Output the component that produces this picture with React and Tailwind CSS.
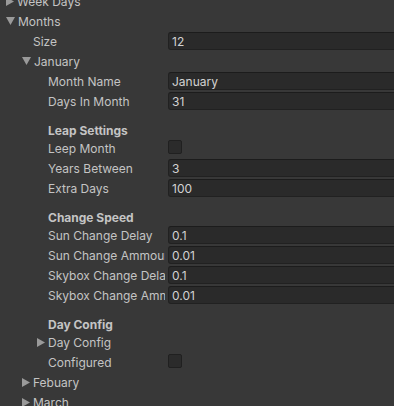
import React from "react";

const Arrow = ({ open }) =>
  open ? (
    <svg width="9" height="8" viewBox="0 0 9 8" className="shrink-0">
      <polygon points="0,0 9,0 4.5,8" fill="#9a9a9a" />
    </svg>
  ) : (
    <svg width="8" height="9" viewBox="0 0 8 9" className="shrink-0">
      <polygon points="0,0 8,4.5 0,9" fill="#9a9a9a" />
    </svg>
  );

const indentClass = ["pl-[18px]", "pl-[33px]", "pl-[48px]"];
const arrowIndent = ["pl-[6px]", "pl-[22px]", "pl-[37px]"];

const Foldout = ({ level, open, label }) => (
  <div className={`h-[20px] flex items-center ${arrowIndent[level]}`}>
    <div className={open ? "w-[12px]" : "w-[11px]"}>
      <Arrow open={open} />
    </div>
    <span className="whitespace-nowrap pt-[2px]">{label}</span>
  </div>
);

const Label = ({ level, text }) => (
  <div
    className={`w-[165px] shrink-0 overflow-hidden whitespace-nowrap pt-[2px] ${indentClass[level]}`}
  >
    {text}
  </div>
);

const Field = ({ level, label, value }) => (
  <div className="h-[20px] flex items-center">
    <Label level={level} text={label} />
    <div className="ml-[3px] flex-1 -mr-[6px] h-[18px] rounded-[3px] bg-[#2a2a2a] border border-[#212121] border-t-[#1c1c1c] pl-[3px] pt-px flex items-center text-[#d2d2d2]">
      {value}
    </div>
  </div>
);

const Check = ({ level, label }) => (
  <div className="h-[20px] flex items-start">
    <div className="h-[20px] flex items-center">
      <Label level={level} text={label} />
    </div>
    <div className="ml-[3px] mt-[2px] w-[14px] h-[14px] rounded-[2px] bg-[#2b2b2b] border border-[#202020]" />
  </div>
);

const Header = ({ text }) => (
  <div className="h-[27px] pt-[13px] pl-[48px] leading-[14px] font-bold whitespace-nowrap">
    {text}
  </div>
);

export default function App() {
  return (
    <div
      className="w-[394px] h-[406px] overflow-hidden bg-[#383838] text-[#c4c4c4] text-[12px]"
      style={{ fontFamily: "Inter, 'Noto Sans', sans-serif" }}
    >
      <div className="-mt-[9px]">
        <Foldout level={0} open={false} label="Week Days" />
        <Foldout level={0} open={true} label="Months" />
        <Field level={1} label="Size" value="12" />
        <Foldout level={1} open={true} label="January" />
        <Field level={2} label="Month Name" value="January" />
        <Field level={2} label="Days In Month" value="31" />
        <Header text="Leap Settings" />
        <Check level={2} label="Leep Month" />
        <Field level={2} label="Years Between" value="3" />
        <Field level={2} label="Extra Days" value="100" />
        <Header text="Change Speed" />
        <Field level={2} label="Sun Change Delay" value="0.1" />
        <Field level={2} label="Sun Change Ammount" value="0.01" />
        <Field level={2} label="Skybox Change Delay" value="0.1" />
        <Field level={2} label="Skybox Change Ammount" value="0.01" />
        <Header text="Day Config" />
        <Foldout level={2} open={false} label="Day Config" />
        <Check level={2} label="Configured" />
        <Foldout level={1} open={false} label="Febuary" />
        <Foldout level={1} open={false} label="March" />
      </div>
    </div>
  );
}
